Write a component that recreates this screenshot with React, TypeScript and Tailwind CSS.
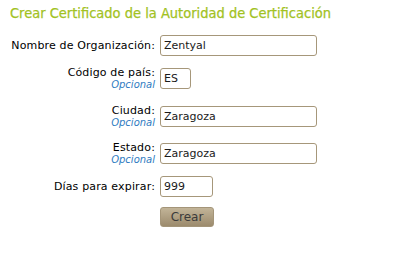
export default function App() {
  const label = "w-[150px] shrink-0 text-right pr-[5px] tracking-[0.15px]";
  const input =
    "h-[21px] shrink-0 border border-[#a6977a] rounded-[3px] bg-white px-[3px] text-[11px] text-[#1a1a1a] outline-none font-['DejaVu_Sans',sans-serif]";
  const opt = "block text-[10px] italic text-[#2f7bc1] leading-[12px] tracking-normal";
  return (
    <div className="w-[394px] h-[269px] bg-white font-['DejaVu_Sans',sans-serif] text-[11px] leading-[13px] text-black">
      <div className="pt-[4px] pl-[10px]">
        <h1 className="text-[14.5px] leading-[18px] text-[#a2c21f] [-webkit-text-stroke:0.25px_#a2c21f] font-['DejaVu_Sans_Condensed','DejaVu_Sans',sans-serif]">
          Crear Certificado de la Autoridad de Certificación
        </h1>
        <div className="mt-[13px] flex flex-col">
          <div className="flex items-center h-[21px] mb-[9px]">
            <div className={label}>Nombre de Organización:</div>
            <input className={`${input} w-[157px]`} defaultValue="Zentyal" />
          </div>
          <div className="flex items-center h-[26px] mb-[12px]">
            <div className={label}>
              Código de país:
              <span className={opt}>Opcional</span>
            </div>
            <input className={`${input} w-[31px]`} defaultValue="ES" />
          </div>
          <div className="flex items-center h-[26px] mb-[11px]">
            <div className={label}>
              Ciudad:
              <span className={opt}>Opcional</span>
            </div>
            <input className={`${input} w-[157px]`} defaultValue="Zaragoza" />
          </div>
          <div className="flex items-center h-[26px] mb-[10px]">
            <div className={label}>
              Estado:
              <span className={opt}>Opcional</span>
            </div>
            <input className={`${input} w-[157px]`} defaultValue="Zaragoza" />
          </div>
          <div className="flex items-center h-[21px] mb-[10px]">
            <div className={label}>Días para expirar:</div>
            <input className={`${input} w-[53px]`} defaultValue="999" />
          </div>
          <div className="flex">
            <div className="w-[150px] shrink-0" />
            <button className="w-[54px] h-[20px] rounded-[3px] border border-[#a49579] bg-gradient-to-b from-[#c2b498] to-[#9c8b6d] text-[12px] text-[#3b3b3b] leading-none">
              Crear
            </button>
          </div>
        </div>
      </div>
    </div>
  );
}
